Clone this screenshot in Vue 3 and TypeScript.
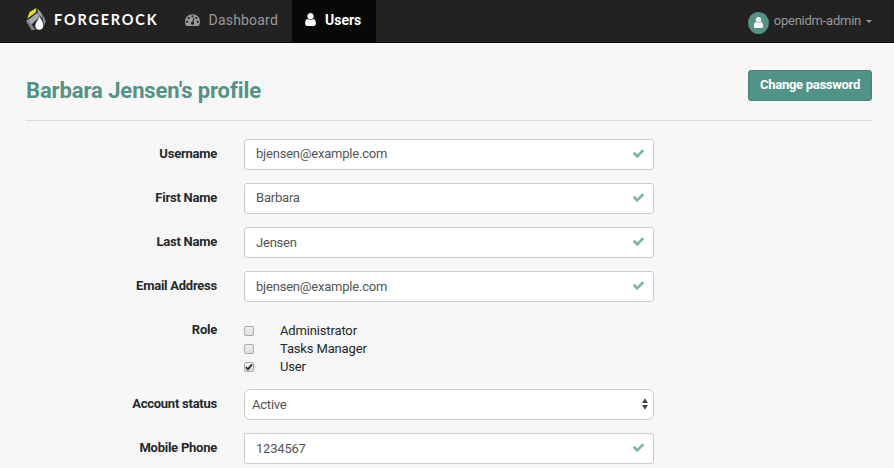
<script setup lang="ts">
import { ref } from 'vue'

interface Field {
  id: string
  label: string
  value: string
  raised?: boolean
}

const before = ref<Field[]>([
  { id: 'userName', label: 'Username', value: 'bjensen@example.com', raised: true },
  { id: 'givenName', label: 'First Name', value: 'Barbara', raised: true },
  { id: 'sn', label: 'Last Name', value: 'Jensen' },
  { id: 'mail', label: 'Email Address', value: 'bjensen@example.com' },
])
const after = ref<Field[]>([{ id: 'phone', label: 'Mobile Phone', value: '1234567' }])
const roles = ref([
  { name: 'Administrator', on: false },
  { name: 'Tasks Manager', on: false },
  { name: 'User', on: true },
])
const status = ref('Active')

const gauge =
  'M384 1152q0-53-37.5-90.5t-90.5-37.5-90.5 37.5-37.5 90.5 37.5 90.5 90.5 37.5 90.5-37.5 37.5-90.5zm192-448q0-53-37.5-90.5t-90.5-37.5-90.5 37.5-37.5 90.5 37.5 90.5 90.5 37.5 90.5-37.5 37.5-90.5zm428 481l101-382q6-26-7.5-48.5t-38.5-29.5-48 6.5-30 39.5l-101 382q-60 5-107 43.5t-63 98.5q-20 77 20 146t117 89 146-20 89-117q16-60-6-117t-72-91zm660-33q0-53-37.5-90.5t-90.5-37.5-90.5 37.5-37.5 90.5 37.5 90.5 90.5 37.5 90.5-37.5 37.5-90.5zm-640-640q0-53-37.5-90.5t-90.5-37.5-90.5 37.5-37.5 90.5 37.5 90.5 90.5 37.5 90.5-37.5 37.5-90.5zm448 192q0-53-37.5-90.5t-90.5-37.5-90.5 37.5-37.5 90.5 37.5 90.5 90.5 37.5 90.5-37.5 37.5-90.5zm320 448q0 261-141 483-19 29-54 29h-1402q-35 0-54-29-141-221-141-483 0-182 71-348t191-286 286-191 348-71 348 71 286 191 191 286 71 348z'
const person =
  'M1536 1399q0 109-62.5 187t-150.5 78h-854q-88 0-150.5-78t-62.5-187q0-85 8.5-160.5t31.5-152 58.5-131 94-89 134.5-34.5q131 128 313 128t313-128q76 0 134.5 34.5t94 89 58.5 131 31.5 152 8.5 160.5zm-256-887q0 159-112.5 271.5t-271.5 112.5-271.5-112.5-112.5-271.5 112.5-271.5 271.5-112.5 271.5 112.5 112.5 271.5z'
const check =
  'M1671 566q0 40-28 68l-724 724-136 136q-28 28-68 28t-68-28l-136-136-362-362q-28-28-28-68t28-68l136-136q28-28 68-28t68 28l294 295 656-657q28-28 68-28t68 28l136 136q28 28 28 68z'
</script>

<template>
  <div class="page">
    <header class="navbar">
      <div class="brand">
        <svg class="mark" width="20" height="23" viewBox="0 0 20 23">
          <path d="M3.600 4 9.800 0.200 10.600 0.600 9.600 4.600 1.200 10.800Z" fill="#e4e600" />
          <path d="M0.200 13.300 2 11 9.600 21.900H5.500Z" fill="#7f888d" />
          <path d="M2 11.900 10.900 4.900 14.200 8.200 5.600 16.600Z" fill="#a3abb0" />
          <path d="M7 15.500 8.900 13.700 7.700 17.200Z" fill="#222" />
          <path d="M11.600 0.800 15.200 4.400 16.800 10.800 11.600 5.400Z" fill="#9aa2a7" />
          <path d="M16.200 5.600 19.800 13.300 18.200 17.500 16.800 11.500Z" fill="#8b9499" />
          <path d="M13.300 7.600C14.800 10.900 18 14.200 17.500 18.200 17.100 20.700 15.500 22 13.200 22 10.700 22 8.900 20.200 9 17.800 9.200 13.800 12.700 11.900 13.300 7.600Z" fill="#fff" stroke="#222" stroke-width="0.500" />
        </svg>
        <span class="wordmark">FORGEROCK</span>
      </div>
      <nav class="nav">
        <a class="item dash"><svg width="15" height="15" viewBox="0 0 1792 1792"><path :d="gauge" fill="currentColor" /></svg><span>Dashboard</span></a>
        <a class="item active"><svg width="15" height="15" viewBox="0 0 1792 1792"><path :d="person" fill="currentColor" /></svg><span>Users</span></a>
      </nav>
      <a class="account">
        <span class="avatar"><svg width="13" height="13" viewBox="0 0 1792 1792"><path :d="person" fill="#fff" /></svg></span>
        <span class="login">openidm-admin</span>
        <span class="caret"></span>
      </a>
    </header>

    <main class="content">
      <div class="heading">
        <h1>Barbara Jensen's profile</h1>
        <button class="change" type="button">Change password</button>
      </div>
      <form class="form">
        <div v-for="f in before" :key="f.id" class="row">
          <label :for="f.id">{{ f.label }}</label>
          <div class="control">
            <input :id="f.id" v-model="f.value" :class="{ raised: f.raised }" type="text" />
            <svg class="tick" width="13" height="13" viewBox="0 0 1792 1792"><path :d="check" /></svg>
          </div>
        </div>
        <div class="row roles">
          <label>Role</label>
          <div class="options">
            <label v-for="r in roles" :key="r.name" class="option">
              <input v-model="r.on" type="checkbox" />
              <span class="box"><svg v-if="r.on" width="8" height="8" viewBox="0 0 8 8"><path d="M0.900 4.200 2.900 6.300 7 1.300" fill="none" stroke="#333" stroke-width="1.900" /></svg></span>
              <span>{{ r.name }}</span>
            </label>
          </div>
        </div>
        <div class="row">
          <label for="status">Account status</label>
          <div class="control">
            <select id="status" v-model="status">
              <option>Active</option>
              <option>Inactive</option>
            </select>
            <svg class="arrows" width="6" height="12" viewBox="0 0 6 12"><path d="M0 5 3 0.300 6 5ZM0 7H6L3 11.700Z" fill="#444" /></svg>
          </div>
        </div>
        <div v-for="f in after" :key="f.id" class="row">
          <label :for="f.id">{{ f.label }}</label>
          <div class="control">
            <input :id="f.id" v-model="f.value" type="text" />
            <svg class="tick" width="13" height="13" viewBox="0 0 1792 1792"><path :d="check" /></svg>
          </div>
        </div>
      </form>
    </main>
  </div>
</template>

<style>
body {
  background: #f7f7f7;
  overflow: hidden;
}
</style>

<style scoped>
.page {
  height: 468px;
  overflow: hidden;
  background: #f7f7f7;
  color: #24292c;
  font: 13px/18px Roboto, sans-serif;
}
.page * {
  box-sizing: border-box;
}
svg {
  display: block;
  flex: none;
}
.navbar {
  display: flex;
  height: 43px;
  padding: 0 22px 0 26px;
  background: #222;
  border-bottom: 1px solid #080808;
}
.brand {
  display: flex;
  width: 149px;
  padding-top: 8px;
}
.wordmark {
  margin: 2px 0 0 8px;
  color: #fff;
  font: 700 14.5px/20px Lato, sans-serif;
  letter-spacing: 1.8px;
}
.nav {
  display: flex;
}
.item {
  display: flex;
  height: 42px;
  color: #999;
  font-size: 14px;
  line-height: 40px;
}
.item svg {
  margin-top: 12px;
}
.dash {
  width: 117px;
  padding-left: 10px;
  gap: 8.500px;
  letter-spacing: 0.200px;
}
.active {
  width: 84px;
  padding-left: 11px;
  gap: 7px;
  background: #080808;
  color: #fff;
  font-weight: 700;
}
.account {
  display: flex;
  margin-left: auto;
  color: #999;
}
.avatar {
  display: flex;
  align-items: center;
  justify-content: center;
  width: 21px;
  height: 22px;
  margin-top: 12px;
  border-radius: 50%;
  background: #519387;
}
.avatar svg {
  margin-bottom: 2px;
}
.login {
  margin-left: 5px;
  line-height: 42px;
  letter-spacing: -0.250px;
}
.caret {
  height: 3px;
  margin: 20px 0 0 5px;
  border: 3px solid transparent;
  border-top-color: #999;
  border-bottom: 0;
}
.content {
  padding: 27px 22px 0 26px;
}
.heading {
  display: flex;
  justify-content: space-between;
  height: 51px;
  border-bottom: 1px solid #ddd;
}
h1 {
  margin: 8px 0 0;
  color: #519387;
  font-size: 22px;
  line-height: 26px;
  font-weight: 700;
  letter-spacing: -0.100px;
}
.change {
  width: 124px;
  height: 31px;
  padding: 0 0 2px;
  border: 1px solid #488378;
  border-radius: 3px;
  background: #519387;
  color: #fff;
  font: 700 13px/18px Roboto, sans-serif;
  letter-spacing: -0.280px;
}
.form {
  display: flex;
  flex-direction: column;
  gap: 13px;
  padding-top: 18px;
}
.row {
  display: grid;
  grid-template-columns: 191px 410px;
  column-gap: 27px;
}
.row > label {
  padding-top: 6px;
  text-align: right;
  font-weight: 700;
  letter-spacing: -0.240px;
}
.control {
  display: grid;
  height: 31px;
}
.control > * {
  grid-area: 1 / 1;
}
.control input,
.control select {
  width: 410px;
  height: 31px;
  margin: 0;
  padding: 0 36px 1px 11px;
  border: 1px solid #ccc;
  border-radius: 3px;
  outline: 0;
  background: #fff;
  color: #555;
  font: 13px/18px Roboto, sans-serif;
  letter-spacing: -0.210px;
}
.control input.raised {
  padding-bottom: 3px;
}
.control select {
  padding: 0 30px 0 7px;
  border-radius: 6px;
  appearance: none;
}
.tick {
  justify-self: end;
  margin: 8px 9px 0 0;
  fill: #7bb5a9;
}
.arrows {
  justify-self: end;
  margin: 9px 6px 0 0;
}
.roles {
  height: 61px;
}
.options {
  padding-top: 7px;
  letter-spacing: -0.150px;
}
.option {
  display: flex;
  align-items: center;
  height: 18px;
}
.option input {
  position: absolute;
  opacity: 0;
}
.box {
  display: flex;
  align-items: center;
  justify-content: center;
  width: 10px;
  height: 10px;
  margin: 0 26px 1px 0;
  border: 1px solid #aaa;
  border-radius: 2px;
  background: linear-gradient(#f0f0f0, #dedede);
}
</style>
